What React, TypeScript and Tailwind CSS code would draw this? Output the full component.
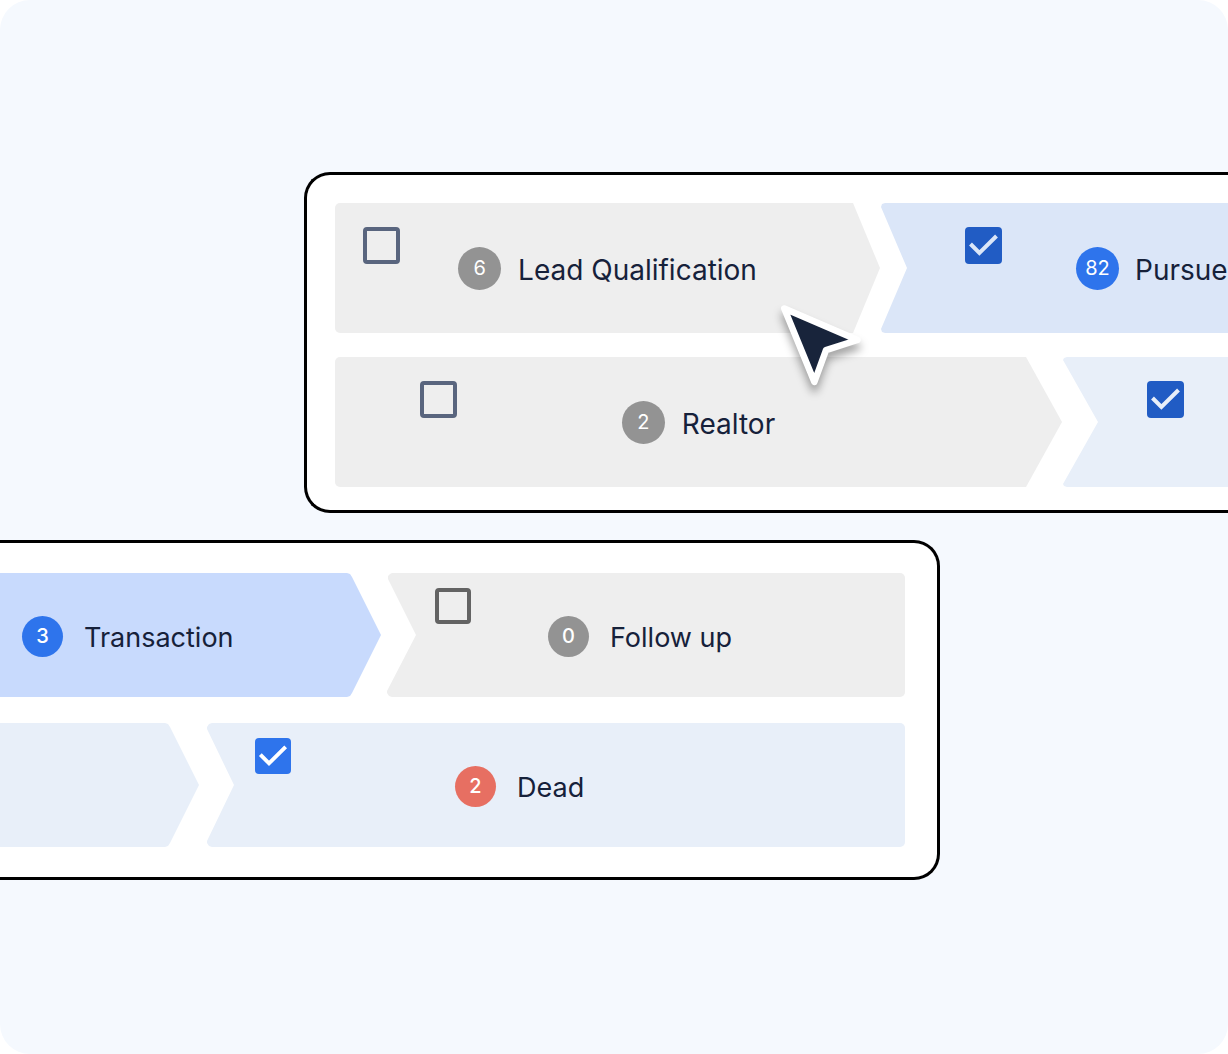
type StepProps = {
  label?: string;
  count?: number;
  checked?: boolean;
  hasCheckbox?: boolean;
  name?: string;
  shape: string;
  checkbox?: string;
  box?: string;
  tick?: string;
  group?: string;
  badge?: string;
};

function Step({
  label,
  count,
  checked = false,
  hasCheckbox = true,
  name,
  shape,
  checkbox = "",
  box = "",
  tick = "",
  group = "",
  badge = "",
}: StepProps) {
  return (
    <li className={`grid min-w-0 basis-0 overflow-hidden ${shape}`}>
      {hasCheckbox && (
        <span className={`col-start-1 row-start-1 grid self-start justify-self-start ${checkbox}`}>
          <input
            type="checkbox"
            defaultChecked={checked}
            aria-label={name ?? label}
            className={`peer col-start-1 row-start-1 size-full appearance-none rounded-[4px] border-4 checked:border-0 ${box}`}
          />
          <svg
            viewBox="0 0 37 37"
            fill="none"
            strokeWidth="4"
            aria-hidden="true"
            className={`pointer-events-none invisible col-start-1 row-start-1 size-full peer-checked:visible ${tick}`}
          >
            <path d="M5.5 17 14.4 26 31.5 9" />
          </svg>
        </span>
      )}
      {label && (
        <div className={`col-start-1 row-start-1 flex items-center self-center whitespace-nowrap ${group}`}>
          <span className={`grid shrink-0 place-items-center rounded-full text-[20px] leading-none text-white ${badge}`}>
            {count}
          </span>
          <span className="pt-[3px]">{label}</span>
        </div>
      )}
    </li>
  );
}

const NAVY_BOX = "border-[#59657e] checked:bg-[#215cc4]";
const GREY_BOX = "border-[#636363] checked:bg-[#2e74ec]";

export default function App() {
  return (
    <main className="flex min-h-screen flex-col gap-[27px] overflow-hidden rounded-[30px] bg-[#f5f9fe] py-[172px] font-['Inter',sans-serif] text-[#16213a]">
      <section
        aria-label="Lead stages"
        className="relative ml-[304px] flex flex-col gap-6 rounded-l-[26px] border-[3px] border-r-0 border-black bg-white pt-7 pb-[23px] pl-7 text-[28px] leading-9"
      >
        <ul className="flex h-[130px] gap-px">
          <Step
            label="Lead Qualification"
            count={6}
            shape="grow-[545] rounded-l-[5px] bg-[#eeeeee] [clip-path:polygon(0_0,calc(100%_-_27px)_0,100%_50%,calc(100%_-_27px)_100%,0_100%)]"
            checkbox="mt-6 ml-7 size-[37px]"
            box={NAVY_BOX}
            tick="stroke-[#eeeeee]"
            group="justify-self-center gap-[17px]"
            badge="size-[43px] bg-[#939393]"
          />
          <Step
            label="Pursue"
            count={82}
            checked
            shape="grow-[347] bg-[#dbe6f8] [clip-path:polygon(4px_0,100%_0,100%_100%,4px_100%,1px_calc(100%_-_1px),0_calc(100%_-_4px),26px_50%,0_4px,1px_1px)]"
            checkbox="mt-6 ml-[84px] size-[37px]"
            box={NAVY_BOX}
            tick="stroke-[#dbe6f8]"
            group="ml-[195px] gap-4"
            badge="size-[43px] bg-[#2e74ec]"
          />
        </ul>
        <ul className="flex h-[130px] gap-px">
          <Step
            label="Realtor"
            count={2}
            shape="grow-[727] rounded-l-[5px] bg-[#eeeeee] [clip-path:polygon(0_0,calc(100%_-_36px)_0,100%_50%,calc(100%_-_36px)_100%,0_100%)]"
            checkbox="mt-6 ml-[85px] size-[37px]"
            box={NAVY_BOX}
            tick="stroke-[#eeeeee]"
            group="justify-self-center gap-[17px]"
            badge="size-[43px] bg-[#939393]"
          />
          <Step
            name="Next stage"
            checked
            shape="grow-[165] bg-[#e8eff9] [clip-path:polygon(4px_0,100%_0,100%_100%,4px_100%,1px_calc(100%_-_1px),0_calc(100%_-_3px),35px_50%,0_3px,1px_1px)]"
            checkbox="mt-6 ml-[84px] size-[37px]"
            box={NAVY_BOX}
            tick="stroke-[#e8eff9]"
          />
        </ul>
        <svg
          viewBox="0 0 100 100"
          aria-hidden="true"
          className="absolute top-[125px] left-[463px] size-[100px] drop-shadow-[0_7px_4px_rgb(0_0_0/0.35)]"
        >
          <path
            d="M14.3 8.5 87.5 40 56 50.2 44.4 82Z"
            fill="#18243b"
            stroke="white"
            strokeWidth="6.5"
            strokeLinejoin="round"
          />
        </svg>
      </section>

      <section
        aria-label="Closing stages"
        className="mr-[288px] flex flex-col gap-[26px] rounded-r-[26px] border-[3px] border-l-0 border-black bg-white py-[30px] pr-8 text-[27px] leading-9"
      >
        <ul className="flex h-[124px] gap-[6px]">
          <Step
            label="Transaction"
            count={3}
            hasCheckbox={false}
            shape="grow-[381] bg-[#c8dafd] [clip-path:polygon(0_0,calc(100%_-_34px)_0,calc(100%_-_31px)_1px,calc(100%_-_29px)_4px,100%_50%,calc(100%_-_29px)_calc(100%_-_4px),calc(100%_-_31px)_calc(100%_-_1px),calc(100%_-_34px)_100%,0_100%)]"
            group="ml-[22px] gap-[21px] pt-[2px]"
            badge="size-[41px] bg-[#2e74ec] font-medium"
          />
          <Step
            label="Follow up"
            count={0}
            shape="grow-[518] rounded-r-[5px] bg-[#eeeeee] [clip-path:polygon(5px_0,100%_0,100%_100%,5px_100%,2px_calc(100%_-_1px),0_calc(100%_-_4px),0_calc(100%_-_6px),29px_50%,1px_6px,1px_3px,3px_1px)]"
            checkbox="mt-[15px] ml-12 size-9"
            box={GREY_BOX}
            tick="stroke-[#eeeeee]"
            group="ml-[161px] gap-[21px] pt-[2px]"
            badge="size-[41px] bg-[#939393] font-medium"
          />
        </ul>
        <ul className="flex h-[124px] gap-2">
          <Step
            hasCheckbox={false}
            shape="grow-[199] bg-[#e8eff9] [clip-path:polygon(0_0,calc(100%_-_34px)_0,calc(100%_-_31px)_1px,calc(100%_-_29px)_4px,100%_50%,calc(100%_-_29px)_calc(100%_-_4px),calc(100%_-_31px)_calc(100%_-_1px),calc(100%_-_34px)_100%,0_100%)]"
          />
          <Step
            label="Dead"
            count={2}
            checked
            shape="grow-[698] rounded-r-[5px] bg-[#e8eff9] [clip-path:polygon(5px_0,100%_0,100%_100%,5px_100%,2px_calc(100%_-_1px),0_calc(100%_-_4px),0_calc(100%_-_6px),27px_50%,0_6px,0_4px,2px_1px)]"
            checkbox="mt-[15px] ml-12 size-9"
            box={GREY_BOX}
            tick="stroke-white"
            group="ml-[248px] gap-[21px] pt-[2px]"
            badge="size-[41px] bg-[#e76f62] font-medium"
          />
        </ul>
      </section>
    </main>
  );
}
